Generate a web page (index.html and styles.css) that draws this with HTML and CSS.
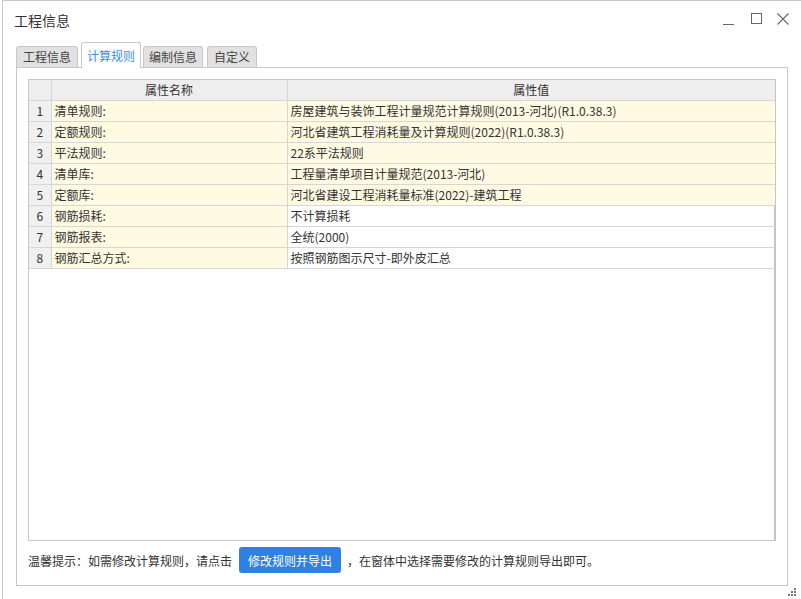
FILE: index.html
```html
<!DOCTYPE html>
<html lang="zh-CN">
<head>
<meta charset="utf-8">
<link rel="stylesheet" href="styles.css">
</head>
<body>
<div class="window">
  <div class="titlebar">
    <div class="title">工程信息</div>
    <div class="controls">
      <svg class="ctl" width="14" height="14" viewBox="0 0 14 14"><line x1="1" y1="12.5" x2="12" y2="12.5" stroke="#666" stroke-width="1"/></svg>
      <svg class="ctl" width="14" height="14" viewBox="0 0 14 14"><rect x="2.5" y="1.5" width="10" height="10" fill="none" stroke="#666" stroke-width="1"/></svg>
      <svg class="ctl" width="14" height="14" viewBox="0 0 14 14"><path d="M1.5 1.5 L12.5 12.5 M12.5 1.5 L1.5 12.5" stroke="#666" stroke-width="1.1"/></svg>
    </div>
  </div>
  <div class="tabs">
    <div class="tab t1">工程信息</div>
    <div class="tab active">计算规则</div>
    <div class="tab t3">编制信息</div>
    <div class="tab t4">自定义</div>
  </div>
  <div class="panel">
    <div class="grid-box">
      <table class="grid">
        <colgroup><col class="c0"><col class="c1"><col class="c2"></colgroup>
        <thead>
          <tr><th class="corner"></th><th>属性名称</th><th>属性值</th></tr>
        </thead>
        <tbody>
          <tr class="y"><td class="num">1</td><td class="name">清单规则:</td><td>房屋建筑与装饰工程计量规范计算规则(2013-河北)(R1.0.38.3)</td></tr>
          <tr class="y"><td class="num">2</td><td class="name">定额规则:</td><td>河北省建筑工程消耗量及计算规则(2022)(R1.0.38.3)</td></tr>
          <tr class="y"><td class="num">3</td><td class="name">平法规则:</td><td>22系平法规则</td></tr>
          <tr class="y"><td class="num">4</td><td class="name">清单库:</td><td>工程量清单项目计量规范(2013-河北)</td></tr>
          <tr class="y"><td class="num">5</td><td class="name">定额库:</td><td>河北省建设工程消耗量标准(2022)-建筑工程</td></tr>
          <tr><td class="num">6</td><td class="name">钢筋损耗:</td><td>不计算损耗</td></tr>
          <tr><td class="num">7</td><td class="name">钢筋报表:</td><td>全统(2000)</td></tr>
          <tr><td class="num">8</td><td class="name">钢筋汇总方式:</td><td>按照钢筋图示尺寸-即外皮汇总</td></tr>
        </tbody>
      </table>
    </div>
    <div class="footer">
      <span>温馨提示：如需修改计算规则，请点击</span>
      <button class="btn">修改规则并导出</button>
      <span>，在窗体中选择需要修改的计算规则导出即可。</span>
    </div>
  </div>
  <div class="grip">
    <svg width="8" height="8" viewBox="0 0 8 8" fill="#777"><rect x="6" y="0" width="2" height="2"/><rect x="3" y="3" width="2" height="2"/><rect x="6" y="3" width="2" height="2"/><rect x="0" y="6" width="2" height="2"/><rect x="3" y="6" width="2" height="2"/><rect x="6" y="6" width="2" height="2"/></svg>
  </div>
</div>
</body>
</html>
```

FILE: styles.css
```css
* { box-sizing: border-box; }
html, body { margin: 0; padding: 0; background: #fff; }
body {
  font-family: "Noto Sans CJK SC", "Noto Sans", "Liberation Sans", sans-serif;
  font-size: 12px;
  color: #333;
  width: 801px;
  height: 599px;
  overflow: hidden;
}
.window {
  position: relative;
  margin-left: 2px;
  width: 799px;
  height: 599px;
  border-top: 1px solid #c8c8c8;
  border-left: 1px solid #c8c8c8;
}
.titlebar {
  height: 41px;
  display: flex;
  align-items: center;
  justify-content: space-between;
  padding: 0 11px 0 11px;
}
.title {
  font-size: 14px;
  color: #333;
  margin-top: -4px;
}
.controls {
  display: flex;
  gap: 13px;
  margin-top: -5px;
}
.ctl { display: block; }
.tabs {
  display: flex;
  align-items: flex-end;
  gap: 3px;
  padding-left: 13px;
  height: 25px;
  position: relative;
  z-index: 1;
}
.tab {
  height: 21px;
  padding: 0 6px;
  line-height: 19px;
  background: #e1e1e1;
  border: 1px solid #c8c8c8;
  border-bottom: none;
  border-radius: 3px 3px 0 0;
  color: #444;
  font-size: 12px;
}
.tab.t3 { padding: 0 5px; margin-left: -1px; }
.tab.t4 { padding: 0 6px; margin-left: 1px; }
.tab.active {
  height: 26px;
  margin-bottom: -1px;
  line-height: 25px;
  background: #fff;
  color: #3a8be6;
  padding: 0 5px;
}
.panel {
  margin-left: 13px;
  width: 772px;
  height: 519px;
  border: 1px solid #c8c8c8;
  padding: 11px 11px 0 11px;
  display: flex;
  flex-direction: column;
}
.grid-box {
  width: 748px;
  height: 462px;
  border: 1px solid #c8c8c8;
  border-right: 2px solid #c4c4c4;
  background: #fff;
}
.grid {
  border-collapse: collapse;
  table-layout: fixed;
  width: 746px;
}
.c0 { width: 22px; }
.c1 { width: 236px; }
.c2 { width: auto; }
.grid th {
  height: 20px;
  background: #eeeeee;
  font-weight: normal;
  color: #333;
  border: 1px solid #d6d6d6;
  border-top: none;
  padding: 0;
  line-height: 17px;
}
.grid th:first-child { border-left: none; }
.grid th:last-child { border-right: none; }
.grid td {
  height: 21px;
  border: 1px solid #d6d6d6;
  padding: 0 0 0 3px;
  line-height: 18px;
  white-space: nowrap;
  overflow: hidden;
}
.grid td:first-child { border-left: none; }
.grid td:last-child { border-right: none; }
.grid td.num {
  background: #f0f0f0;
  text-align: center;
  padding: 0;
  color: #333;
}
.grid td.name { background: #fffbe3; }
.grid tr.y td:last-child { background: #fffbe3; }
.footer {
  display: flex;
  align-items: center;
  height: 38px;
  padding-top: 0;
  white-space: nowrap;
}
.btn {
  font-family: inherit;
  font-size: 12px;
  color: #fff;
  background: #2f80e2;
  border: none;
  border-radius: 3px;
  height: 26px;
  width: 102px;
  margin: 0 6px 0 7px;
  padding: 0;
}
.grip {
  position: absolute;
  right: 5px;
  bottom: 3px;
  line-height: 0;
}
```
